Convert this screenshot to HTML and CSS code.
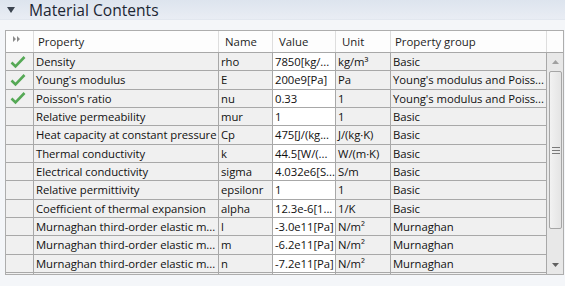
FILE: index.html
```html
<!DOCTYPE html>
<html>
<head>
<meta charset="utf-8">
<link rel="stylesheet" href="styles.css">
</head>
<body>
<div class="section-head">
  <svg class="caret" width="8" height="6" viewBox="0 0 8 6"><path d="M0 0H8L4 6Z" fill="#3c4450"/></svg>
  <span class="title">Material Contents</span>
</div>
<div class="grid">
  <div class="row head">
    <div class="c ic"><svg width="8" height="6" viewBox="0 0 8 6"><path d="M0 0L3 3L0 6Z M4 0L7 3L4 6Z" fill="#8a8a8a"/></svg></div>
    <div class="c">Property</div>
    <div class="c">Name</div>
    <div class="c">Value</div>
    <div class="c">Unit</div>
    <div class="c">Property group</div>
    <div class="c sb-h"></div>
  </div>
  <div class="body">
    <div class="rows">
      <div class="row"><div class="c ic"><svg class="chk" width="16" height="14" viewBox="0 0 16 14"><path d="M1.5 7.5L5.5 11.5L14.5 2" fill="none" stroke="#56a956" stroke-width="2.6"/></svg></div><div class="c">Density</div><div class="c">rho</div><div class="c v">7850[kg/...</div><div class="c">kg/m³</div><div class="c">Basic</div></div>
      <div class="row"><div class="c ic"><svg class="chk" width="16" height="14" viewBox="0 0 16 14"><path d="M1.5 7.5L5.5 11.5L14.5 2" fill="none" stroke="#56a956" stroke-width="2.6"/></svg></div><div class="c">Young's modulus</div><div class="c">E</div><div class="c v">200e9[Pa]</div><div class="c">Pa</div><div class="c">Young's modulus and Poiss...</div></div>
      <div class="row"><div class="c ic"><svg class="chk" width="16" height="14" viewBox="0 0 16 14"><path d="M1.5 7.5L5.5 11.5L14.5 2" fill="none" stroke="#56a956" stroke-width="2.6"/></svg></div><div class="c">Poisson's ratio</div><div class="c">nu</div><div class="c v">0.33</div><div class="c">1</div><div class="c">Young's modulus and Poiss...</div></div>
      <div class="row"><div class="c ic"></div><div class="c">Relative permeability</div><div class="c">mur</div><div class="c v">1</div><div class="c">1</div><div class="c">Basic</div></div>
      <div class="row"><div class="c ic"></div><div class="c">Heat capacity at constant pressure</div><div class="c">Cp</div><div class="c v">475[J/(kg...</div><div class="c">J/(kg·K)</div><div class="c">Basic</div></div>
      <div class="row"><div class="c ic"></div><div class="c">Thermal conductivity</div><div class="c">k</div><div class="c v">44.5[W/(...</div><div class="c">W/(m·K)</div><div class="c">Basic</div></div>
      <div class="row"><div class="c ic"></div><div class="c">Electrical conductivity</div><div class="c">sigma</div><div class="c v">4.032e6[S...</div><div class="c">S/m</div><div class="c">Basic</div></div>
      <div class="row"><div class="c ic"></div><div class="c">Relative permittivity</div><div class="c">epsilonr</div><div class="c v">1</div><div class="c">1</div><div class="c">Basic</div></div>
      <div class="row"><div class="c ic"></div><div class="c">Coefficient of thermal expansion</div><div class="c">alpha</div><div class="c v">12.3e-6[1...</div><div class="c">1/K</div><div class="c">Basic</div></div>
      <div class="row"><div class="c ic"></div><div class="c">Murnaghan third-order elastic m...</div><div class="c">l</div><div class="c v">-3.0e11[Pa]</div><div class="c">N/m²</div><div class="c">Murnaghan</div></div>
      <div class="row"><div class="c ic"></div><div class="c">Murnaghan third-order elastic m...</div><div class="c">m</div><div class="c v">-6.2e11[Pa]</div><div class="c">N/m²</div><div class="c">Murnaghan</div></div>
      <div class="row"><div class="c ic"></div><div class="c">Murnaghan third-order elastic m...</div><div class="c">n</div><div class="c v">-7.2e11[Pa]</div><div class="c">N/m²</div><div class="c">Murnaghan</div></div>
      <div class="row"><div class="c ic"></div><div class="c"></div><div class="c"></div><div class="c v"></div><div class="c"></div><div class="c"></div></div>
    </div>
    <div class="scrollbar">
      <div class="arrow"><svg width="7" height="4" viewBox="0 0 7 4"><path d="M0 4L3.5 0L7 4Z" fill="#a0a0a0"/></svg></div>
      <div class="track">
        <div class="thumb"><svg width="8" height="7" viewBox="0 0 8 7"><path d="M0 .5H8M0 3.5H8M0 6.5H8" stroke="#7a7a7a" stroke-width="1"/></svg></div>
      </div>
      <div class="arrow"><svg width="7" height="4" viewBox="0 0 7 4"><path d="M0 0L7 0L3.5 4Z" fill="#606060"/></svg></div>
    </div>
  </div>
</div>
</body>
</html>
```

FILE: styles.css
```css
html, body {
  margin: 0;
  padding: 0;
}
body {
  width: 565px;
  height: 286px;
  background: #f4f6f9;
  font-family: "Open Sans", "Noto Sans", sans-serif;
  color: #111;
  overflow: hidden;
}
.section-head {
  height: 20px;
  display: flex;
  align-items: center;
  background: linear-gradient(#dde4ee, #e9edf4);
  border-bottom: 1px solid #e2e7ef;
  box-sizing: border-box;
}
.caret {
  margin-left: 7px;
  margin-right: 14px;
}
.title {
  font-size: 15.6px;
  color: #1c2633;
  line-height: 18px;
}
.grid {
  margin: 10px 0 0 5px;
  width: 559px;
  border: 1px solid #adadad;
  box-sizing: border-box;
  background: #fff;
}
.row {
  display: grid;
  grid-template-columns: 28px 185px 54px 63px 55px 156px;
  height: 18.33px;
  box-sizing: border-box;
  border-bottom: 1px solid #a8a8a8;
  font-size: 11.3px;
  letter-spacing: -0.05px;
}
.row .c {
  background: #f0f0f0;
  border-right: 1px solid #a8a8a8;
  padding-left: 2px;
  white-space: nowrap;
  overflow: hidden;
  line-height: 17px;
  box-sizing: border-box;
}
.row .c.v {
  background: #ffffff;
}
.row .c.ic {
  display: flex;
  align-items: center;
  padding-left: 4px;
}
.row.head {
  grid-template-columns: 28px 185px 54px 63px 55px 156px 16px;
  height: 22px;
  border-bottom: 1px solid #a8a8a8;
  font-size: 11.4px;
  letter-spacing: 0;
}
.row.head .c {
  background: #fdfdfd;
  border-right: 1px solid #dedede;
  line-height: 22px;
  padding-left: 4px;
  color: #1e1e1e;
}
.row.head .c:nth-child(3),
.row.head .c:nth-child(4),
.row.head .c:nth-child(5) {
  padding-left: 6px;
}
.row.head .c.ic {
  align-items: flex-start;
  padding-top: 5px;
  padding-left: 7px;
}
.row.head .c.sb-h {
  border-right: none;
}
.body {
  display: flex;
  height: 221px;
  overflow: hidden;
}
.rows {
  width: 541px;
}
.scrollbar {
  width: 16px;
  height: 221px;
  display: flex;
  flex-direction: column;
  background: #e8e8e8;
}
.arrow {
  height: 18px;
  display: flex;
  align-items: center;
  justify-content: center;
}
.track {
  flex: 1;
  display: flex;
  flex-direction: column;
}
.thumb {
  margin: 0 1px 0 2px;
  height: 158px;
  border: 1px solid #a6a6a6;
  border-radius: 2px;
  background: linear-gradient(90deg, #f2f2f2, #e4e4e4);
  display: flex;
  align-items: center;
  justify-content: center;
  box-sizing: border-box;
}
```
